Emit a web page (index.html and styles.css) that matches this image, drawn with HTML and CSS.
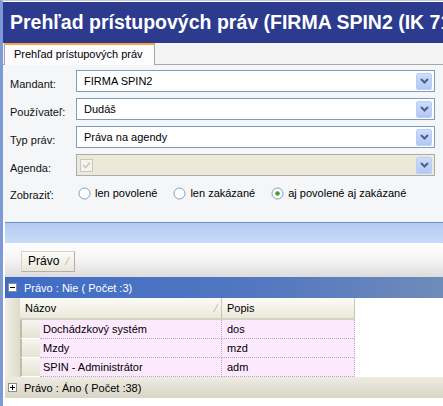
FILE: index.html
```html
<!DOCTYPE html>
<html lang="sk">
<head>
    <meta charset="UTF-8">
    <title>Prehľad prístupových práv</title>
    <link rel="stylesheet" href="styles.css">
</head>
<body>
    <div class="window">
        <div class="title-bar">Prehľad prístupových práv (FIRMA SPIN2 (IK 71975471))</div>

        <div class="tab-strip">
            <div class="tab">Prehľad prístupových práv</div>
        </div>

        <div class="form">
            <div class="form-row">
                <label>Mandant:</label>
                <div class="combo"><span class="combo-text">FIRMA SPIN2</span><span class="combo-btn"><svg width="9" height="6" viewBox="0 0 9 6"><path d="M1 1 L4.5 4.5 L8 1" fill="none" stroke="#4d6185" stroke-width="2"/></svg></span></div>
            </div>
            <div class="form-row">
                <label>Používateľ:</label>
                <div class="combo"><span class="combo-text">Dudáš</span><span class="combo-btn"><svg width="9" height="6" viewBox="0 0 9 6"><path d="M1 1 L4.5 4.5 L8 1" fill="none" stroke="#4d6185" stroke-width="2"/></svg></span></div>
            </div>
            <div class="form-row">
                <label>Typ práv:</label>
                <div class="combo"><span class="combo-text">Práva na agendy</span><span class="combo-btn"><svg width="9" height="6" viewBox="0 0 9 6"><path d="M1 1 L4.5 4.5 L8 1" fill="none" stroke="#4d6185" stroke-width="2"/></svg></span></div>
            </div>
            <div class="form-row">
                <label>Agenda:</label>
                <div class="combo disabled">
                    <span class="check-box"><svg width="9" height="8" viewBox="0 0 9 8"><path d="M1 4 L3.5 6.5 L8 1.5" fill="none" stroke="#c8c8c0" stroke-width="1.6"/></svg></span>
                    <span class="combo-btn"><svg width="9" height="6" viewBox="0 0 9 6"><path d="M1 1 L4.5 4.5 L8 1" fill="none" stroke="#4d6185" stroke-width="2"/></svg></span>
                </div>
            </div>
            <div class="form-row radios">
                <label>Zobraziť:</label>
                <span class="radio first"><svg width="13" height="13" viewBox="0 0 13 13"><circle cx="6.5" cy="6.5" r="5.5" fill="#fff" stroke="#7f9db9"/></svg>len povolené</span>
                <span class="radio"><svg width="13" height="13" viewBox="0 0 13 13"><circle cx="6.5" cy="6.5" r="5.5" fill="#fff" stroke="#7f9db9"/></svg>len zakázané</span>
                <span class="radio"><svg width="13" height="13" viewBox="0 0 13 13"><circle cx="6.5" cy="6.5" r="5.5" fill="#fff" stroke="#7f9db9"/><circle cx="6.5" cy="6.5" r="2.3" fill="#3fa13f"/></svg>aj povolené aj zakázané</span>
            </div>
        </div>

        <div class="grid-area">
            <div class="band"></div>
            <div class="group-by">
                <span class="group-btn">Právo <span class="sort">⁄</span></span>
            </div>

            <div class="group-row open">
                <svg class="toggle" width="9" height="9" viewBox="0 0 9 9"><rect x="0.5" y="0.5" width="8" height="8" fill="#fff" stroke="#8c8c8c"/><path d="M2 4.5 H7" stroke="#000" stroke-width="1"/></svg>
                Právo : Nie ( Počet :3)
            </div>
            <div class="group-body">
                <div class="indent"></div>
                <div class="grid">
                    <div class="grid-head">
                        <div class="head-cell name">Názov <span class="sort">⁄</span></div>
                        <div class="head-cell desc">Popis</div>
                    </div>
                    <div class="grid-row">
                        <div class="row-sel"></div>
                        <div class="cell name">Dochádzkový systém</div>
                        <div class="cell desc">dos</div>
                    </div>
                    <div class="grid-row">
                        <div class="row-sel"></div>
                        <div class="cell name">Mzdy</div>
                        <div class="cell desc">mzd</div>
                    </div>
                    <div class="grid-row">
                        <div class="row-sel"></div>
                        <div class="cell name">SPIN - Administrátor</div>
                        <div class="cell desc">adm</div>
                    </div>
                </div>
            </div>
            <div class="group-row closed">
                <svg class="toggle" width="9" height="9" viewBox="0 0 9 9"><rect x="0.5" y="0.5" width="8" height="8" fill="#fff" stroke="#8c8c8c"/><path d="M2 4.5 H7 M4.5 2 V7" stroke="#000" stroke-width="1"/></svg>
                Právo : Áno ( Počet :38)
            </div>
        </div>
    </div>
</body>
</html>
```

FILE: styles.css
```css
body {
    margin: 0;
    padding: 0;
    background-color: #fff;
    font-family: "Liberation Sans", Arial, sans-serif;
    font-size: 11px;
    color: #000;
    overflow: hidden;
}

.window {
    height: 406px;
    border-left: 3px solid #7d99d6; /* blue frame on the left */
    border-top: 1px solid #c3cbd9;
    box-sizing: border-box;
}

/* header */
.title-bar {
    height: 41px;
    margin-top: 1px;
    background-color: #2c3b8d;
    color: #fff;
    font-size: 19.5px;
    font-weight: bold;
    line-height: 40px;
    padding-left: 7px;
    white-space: nowrap;
    overflow: hidden;
}

.tab-strip {
    height: 21px;
    background-color: #f4f4f4;
    border-bottom: 1px solid #a7a6aa;
    padding-left: 1px;
    display: flex;
    align-items: flex-end;
}

.tab {
    height: 20px;
    padding: 0 11px 0 9px;
    background-color: #fcfcfe;
    border: 1px solid #a7a6aa;
    border-top: 2px solid #f5a53a;
    border-bottom: none;
    line-height: 19px;
    font-size: 11px;
    margin-bottom: -1px;
}

/* filter form */
.form {
    background-color: #f5f6f8;
    padding: 5px 8px 8px 7px;
    height: 144px;
}

.form-row {
    display: flex;
    align-items: center;
    height: 22px;
    margin-bottom: 6px;
}

.form-row label {
    width: 66px;
    flex-shrink: 0;
    font-size: 11px;
    padding-top: 6px;
    color: #111;
}

.combo {
    flex: 1;
    height: 22px;
    box-sizing: border-box;
    border: 1px solid #7f9db9;
    background-color: #fff;
    display: flex;
    align-items: center;
    padding: 0 2px 0 7px;
}

.combo.disabled {
    background-color: #ece9d8;
    border-color: #a5acb2;
    padding-left: 3px;
}

.combo-text {
    flex: 1;
    font-size: 11px;
}

.combo-btn {
    margin-left: auto;
    width: 16px;
    height: 17px;
    box-sizing: border-box;
    border: 1px solid #bacdf4;
    border-radius: 2px;
    background: linear-gradient(#cddcfc, #b3c7f3);
    display: flex;
    align-items: center;
    justify-content: center;
}

.check-box {
    width: 13px;
    height: 13px;
    box-sizing: border-box;
    border: 1px solid #cac8bb;
    background-color: #f4f3ee;
    display: flex;
    align-items: center;
    justify-content: center;
}

.radios {
    margin-top: 1px;
}

.radios label {
    padding-top: 4px;
}

.radio {
    display: inline-flex;
    align-items: center;
    gap: 4px;
    margin-right: 16px;
    font-size: 11px;
    white-space: nowrap;
    flex-shrink: 0;
}

.radio.first {
    margin-left: 2px;
}

/* grid */
.grid-area {
    padding-left: 2px;
    background-color: #fff;
}

.band {
    height: 20px;
    border-top: 1px solid #6d8dcb;
    background: linear-gradient(#b3caf1, #c9dbf8);
}

.group-by {
    height: 34px;
    background: linear-gradient(#ffffff, #f4f4f4 50%, #dcdcdc);
    padding-left: 16px;
    display: flex;
    align-items: center;
}

.group-btn {
    height: 19px;
    line-height: 19px;
    padding: 0 6px 0 6px;
    border: 1px solid #d8d5c6;
    border-right-color: #b5b1a0;
    border-bottom-color: #b5b1a0;
    background: linear-gradient(#fbfbf7, #e9e7dc);
    font-size: 12px;
    margin-top: 2px;
}

.sort {
    color: #b0ad9d;
    font-size: 10px;
    margin-left: 4px;
}

.group-row {
    height: 21px;
    display: flex;
    align-items: center;
    font-size: 11px;
}

.group-row.open {
    background: linear-gradient(to right, #3f6cc6, #5478c0 60%, #6f8bb9);
    color: #fff;
}

.group-row.closed {
    background: linear-gradient(#eeece2, #d8d5c6);
    color: #000;
}

.toggle {
    margin: 0 7px 0 3px;
    flex-shrink: 0;
}

.group-body {
    display: flex;
}

.indent {
    width: 15px;
    background: linear-gradient(to right, #f2f0e6, #dedbc9);
}

.grid {
    flex: 1;
}

.grid-head {
    display: flex;
    height: 22px;
}

.head-cell {
    box-sizing: border-box;
    padding-left: 5px;
    display: flex;
    align-items: center;
    font-size: 11px;
    background: linear-gradient(#fbfbf6, #ebe9dc);
    border-right: 1px solid #c9c6b5;
    border-bottom: 2px solid #d6d3c2;
}

.head-cell.name {
    width: 202px;
}

.head-cell.name .sort {
    margin-left: auto;
    margin-right: 4px;
}

.head-cell.desc {
    width: 133px;
}

.grid-row {
    display: flex;
    height: 19px;
}

.row-sel {
    width: 20px;
    box-sizing: border-box;
    background: linear-gradient(#f6f5ef, #e6e3d3);
    border-left: 2px solid #bfbcaa;
    border-bottom: 1px solid #fff;
}

.cell {
    box-sizing: border-box;
    background-color: #fde9fd;
    border-right: 1px dotted #b9a9b9;
    border-bottom: 1px dotted #b9a9b9;
    padding-left: 3px;
    font-size: 11px;
    line-height: 18px;
}

.cell.name {
    width: 182px;
}

.cell.desc {
    width: 133px;
    padding-left: 5px;
}
```
